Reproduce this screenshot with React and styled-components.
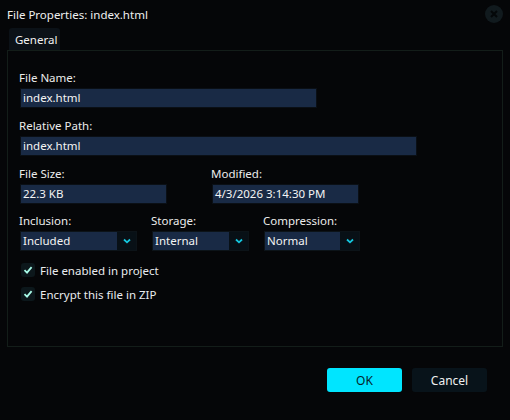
import styled, { createGlobalStyle } from "styled-components";

const Global = createGlobalStyle`
  html, body {
    margin: 0;
    padding: 0;
    background: #050608;
  }
  body {
    font-family: "Noto Sans", "Liberation Sans", sans-serif;
    font-size: 11.5px;
    color: #e9ecef;
  }
`;

const Dialog = styled.div`
  width: 510px;
  height: 420px;
  display: flex;
  flex-direction: column;
  background: #050608;
`;

const TitleBar = styled.div`
  height: 28px;
  display: flex;
  align-items: center;
  justify-content: space-between;
  padding: 0 7px 0 7px;
  box-sizing: border-box;
  color: #f0f0f0;
`;

const CloseButton = styled.div`
  width: 18px;
  height: 18px;
  border-radius: 50%;
  background: #111a1e;
  display: flex;
  align-items: center;
  justify-content: center;
`;

const TabStrip = styled.div`
  display: flex;
  padding-left: 9px;
`;

const Tab = styled.div`
  height: 22px;
  width: 51px;
  box-sizing: border-box;
  padding-left: 6px;
  display: flex;
  align-items: center;
  background: #0b1117;
  border-radius: 3px 3px 0 0;
  color: #f2f2f2;
`;

const Panel = styled.div`
  margin: 0 7px;
  height: 297px;
  box-sizing: border-box;
  border: 1px solid #131d19;
  padding: 19px 11px 0 11px;
  display: flex;
  flex-direction: column;
  gap: 10px;
`;

const Row = styled.div`
  display: flex;
  margin-top: ${(p) => p.$mt || 0}px;
`;

const Field = styled.div`
  display: flex;
  flex-direction: column;
  gap: 2px;
  width: ${(p) => p.$w}px;
`;

const Label = styled.div`
  line-height: 16px;
  color: #ececec;
`;

const TextBox = styled.div`
  height: 20px;
  width: ${(p) => p.$w}px;
  box-sizing: border-box;
  margin-left: 1px;
  background: #192a45;
  border: 1px solid #0a0f15;
  padding-left: 2px;
  line-height: 18px;
  color: #f4f4f4;
  white-space: nowrap;
`;

const Select = styled.div`
  height: 20px;
  width: ${(p) => p.$w}px;
  box-sizing: border-box;
  margin-left: 1px;
  display: flex;
  border: 1px solid #0c1318;
  background: #081016;
`;

const SelectValue = styled.div`
  flex: 1;
  background: #192a45;
  padding-left: 2px;
  line-height: 18px;
  color: #f4f4f4;
`;

const Chevron = styled.div`
  width: 19px;
  display: flex;
  align-items: center;
  justify-content: center;
`;

const Checks = styled.div`
  display: flex;
  flex-direction: column;
  gap: 8px;
  margin-top: 1px;
  padding-left: 2px;
`;

const CheckRow = styled.div`
  display: flex;
  align-items: center;
  gap: 5px;
  height: 16px;
`;

const Box = styled.div`
  width: 14px;
  height: 14px;
  border-radius: 3px;
  background: #0c171b;
  display: flex;
  align-items: center;
  justify-content: center;
`;

const Footer = styled.div`
  display: flex;
  justify-content: flex-end;
  gap: 10px;
  padding: 21px 23px 0 0;
`;

const Button = styled.div`
  width: 75px;
  height: 24px;
  border-radius: 3px;
  display: flex;
  align-items: center;
  justify-content: center;
  font-size: 12px;
  background: ${(p) => (p.$primary ? "#00e5ff" : "#08131a")};
  color: ${(p) => (p.$primary ? "#06262b" : "#f0f0f0")};
`;

function Check() {
  return (
    <svg width="10" height="10" viewBox="0 0 10 10">
      <path d="M1.5 5.2 L4 7.6 L8.6 2.2" fill="none" stroke="#a8fbe8" strokeWidth="1.8" />
    </svg>
  );
}

function Dropdown({ w, value }) {
  return (
    <Select $w={w}>
      <SelectValue>{value}</SelectValue>
      <Chevron>
        <svg width="8" height="6" viewBox="0 0 8 6">
          <path d="M1 1.5 L4 4.3 L7 1.5" fill="none" stroke="#14c6dd" strokeWidth="1.8" />
        </svg>
      </Chevron>
    </Select>
  );
}

export default function App() {
  return (
    <Dialog>
      <Global />
      <TitleBar>
        <span>File Properties: index.html</span>
        <CloseButton>
          <svg width="8" height="8" viewBox="0 0 8 8">
            <path d="M1 1 L7 7 M7 1 L1 7" stroke="#040709" strokeWidth="2" />
          </svg>
        </CloseButton>
      </TitleBar>
      <TabStrip>
        <Tab>General</Tab>
      </TabStrip>
      <Panel>
        <Field $w={400}>
          <Label>File Name:</Label>
          <TextBox $w={297}>index.html</TextBox>
        </Field>
        <Field $w={400}>
          <Label>Relative Path:</Label>
          <TextBox $w={397}>index.html</TextBox>
        </Field>
        <Row>
          <Field $w={192}>
            <Label>File Size:</Label>
            <TextBox $w={147}>22.3 KB</TextBox>
          </Field>
          <Field $w={192}>
            <Label>Modified:</Label>
            <TextBox $w={147}>4/3/2026 3:14:30 PM</TextBox>
          </Field>
        </Row>
        <Row $mt={-1}>
          <Field $w={132}>
            <Label>Inclusion:</Label>
            <Dropdown w={117} value="Included" />
          </Field>
          <Field $w={112}>
            <Label>Storage:</Label>
            <Dropdown w={97} value="Internal" />
          </Field>
          <Field $w={110}>
            <Label>Compression:</Label>
            <Dropdown w={96} value="Normal" />
          </Field>
        </Row>
        <Checks>
          <CheckRow>
            <Box>
              <Check />
            </Box>
            File enabled in project
          </CheckRow>
          <CheckRow>
            <Box>
              <Check />
            </Box>
            Encrypt this file in ZIP
          </CheckRow>
        </Checks>
      </Panel>
      <Footer>
        <Button $primary>OK</Button>
        <Button>Cancel</Button>
      </Footer>
    </Dialog>
  );
}
